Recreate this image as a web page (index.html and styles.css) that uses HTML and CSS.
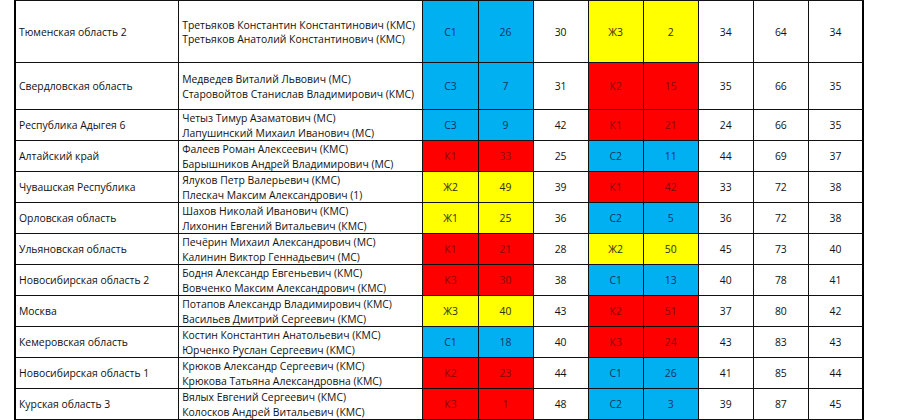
FILE: index.html
```html
<!DOCTYPE html>
<html lang="ru">
<head>
<meta charset="utf-8">
<link rel="stylesheet" href="styles.css">
</head>
<body>
<div class="wrap">
<table class="results">
<colgroup>
<col class="c-region"><col class="c-names">
<col class="c-n"><col class="c-n"><col class="c-n"><col class="c-n"><col class="c-n"><col class="c-n"><col class="c-n"><col class="c-n">
</colgroup>
<tr class="h62"><td class="reg">Тюменская область 2</td><td class="nm">Третьяков Константин Константинович (КМС)<br>Третьяков Анатолий Константинович (КМС)</td><td class="b">С1</td><td class="b">26</td><td>30</td><td class="y">Ж3</td><td class="y">2</td><td>34</td><td>64</td><td class="end">34</td></tr>
<tr class="h47"><td class="reg">Свердловская область</td><td class="nm">Медведев Виталий Львович (МС)<br>Старовойтов Станислав Владимирович (КМС)</td><td class="b">С3</td><td class="b">7</td><td>31</td><td class="r">К2</td><td class="r">15</td><td>35</td><td>66</td><td class="end">35</td></tr>
<tr class="h31"><td class="reg">Республика Адыгея 6</td><td class="nm">Четыз Тимур Азаматович (МС)<br>Лапушинский Михаил Иванович (МС)</td><td class="b">С3</td><td class="b">9</td><td>42</td><td class="r">К1</td><td class="r">21</td><td>24</td><td>66</td><td class="end">35</td></tr>
<tr class="h31"><td class="reg">Алтайский край</td><td class="nm">Фалеев Роман Алексеевич (КМС)<br>Барышников Андрей Владимирович (МС)</td><td class="r">К1</td><td class="r">33</td><td>25</td><td class="b">С2</td><td class="b">11</td><td>44</td><td>69</td><td class="end">37</td></tr>
<tr class="h31"><td class="reg">Чувашская Республика</td><td class="nm">Ялуков Петр Валерьевич (КМС)<br>Плескач Максим Александрович (1)</td><td class="y">Ж2</td><td class="y">49</td><td>39</td><td class="r">К1</td><td class="r">42</td><td>33</td><td>72</td><td class="end">38</td></tr>
<tr class="h31"><td class="reg">Орловская область</td><td class="nm">Шахов Николай Иванович (КМС)<br>Лихонин Евгений Витальевич (КМС)</td><td class="y">Ж1</td><td class="y">25</td><td>36</td><td class="b">С2</td><td class="b">5</td><td>36</td><td>72</td><td class="end">38</td></tr>
<tr class="h31"><td class="reg">Ульяновская область</td><td class="nm">Печёрин Михаил Александрович (МС)<br>Калинин Виктор Геннадьевич (МС)</td><td class="r">К1</td><td class="r">21</td><td>28</td><td class="y">Ж2</td><td class="y">50</td><td>45</td><td>73</td><td class="end">40</td></tr>
<tr class="h31"><td class="reg">Новосибирская область 2</td><td class="nm">Бодня Александр Евгеньевич (КМС)<br>Вовченко Максим Александрович (КМС)</td><td class="r">К3</td><td class="r">30</td><td>38</td><td class="b">С1</td><td class="b">13</td><td>40</td><td>78</td><td class="end">41</td></tr>
<tr class="h31"><td class="reg">Москва</td><td class="nm">Потапов Александр Владимирович (КМС)<br>Васильев Дмитрий Сергеевич (КМС)</td><td class="y">Ж3</td><td class="y">40</td><td>43</td><td class="r">К2</td><td class="r">51</td><td>37</td><td>80</td><td class="end">42</td></tr>
<tr class="h31"><td class="reg">Кемеровская область</td><td class="nm">Костин Константин Анатольевич (КМС)<br>Юрченко Руслан Сергеевич (КМС)</td><td class="b">С1</td><td class="b">18</td><td>40</td><td class="r">К3</td><td class="r">24</td><td>43</td><td>83</td><td class="end">43</td></tr>
<tr class="h31"><td class="reg">Новосибирская область 1</td><td class="nm">Крюков Александр Сергеевич (КМС)<br>Крюкова Татьяна Александровна (КМС)</td><td class="r">К2</td><td class="r">23</td><td>44</td><td class="b">С1</td><td class="b">26</td><td>41</td><td>85</td><td class="end">44</td></tr>
<tr class="h31"><td class="reg">Курская область 3</td><td class="nm">Вялых Евгений Сергеевич (КМС)<br>Колосков Андрей Витальевич (КМС)</td><td class="r">К3</td><td class="r">1</td><td>48</td><td class="b">С2</td><td class="b">3</td><td>39</td><td>87</td><td class="end">45</td></tr>
</table>
</div>
</body>
</html>
```
FILE: styles.css
```css
html, body {
  margin: 0;
  padding: 0;
  background: #ffffff;
}
.wrap {
  padding: 0 0 0 14px;
}
.results {
  border-collapse: separate;
  border-spacing: 0;
  table-layout: fixed;
  width: 850px;
  font-family: "Open Sans", "Noto Sans", sans-serif;
  font-size: 10.4px;
  color: #111;
  border-left: 2px solid #000;
  border-top: 1px solid #111;
}
.c-region { width: 163px; }
.c-names { width: 244px; }
.c-n { width: 55px; }
.results td {
  border-right: 1px solid #111;
  border-bottom: 1px solid #111;
  padding: 1px 0 0 0;
  text-align: center;
  vertical-align: middle;
  line-height: 14.5px;
  white-space: nowrap;
}
.results td.end {
  border-right: 2px solid #000;
}
.results td.reg,
.results td.nm {
  text-align: left;
  padding-left: 3px;
}
.h62 td { height: 60px; }
.h47 td { height: 45px; }
.h31 td { height: 29px; }
.b { background: #00b0f0; color: #16325e; }
.r { background: #ff0000; color: #850808; }
.y { background: #ffff00; color: #2e2e14; }
```
